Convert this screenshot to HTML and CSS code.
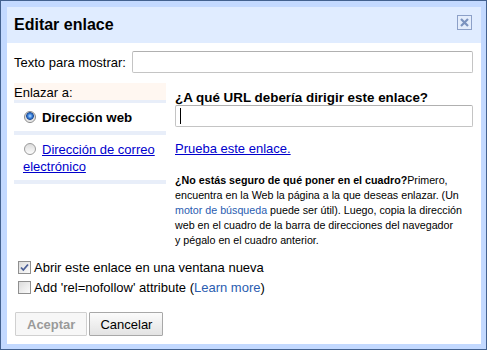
FILE: index.html
```html
<!DOCTYPE html>
<html lang="es">
<head>
  <meta charset="UTF-8">
  <title>Editar enlace</title>
  <link rel="stylesheet" href="styles.css">
</head>
<body>
  <div class="dialog">
    <div class="frame">
      <div class="title-bar">
        <span class="title">Editar enlace</span>
        <span class="close">
          <svg width="15" height="15" viewBox="0 0 15 15">
            <rect x="0.5" y="0.5" width="14" height="14" fill="#e4edfc" stroke="#8ca0c8"/>
            <path d="M4 4 L11 11 M11 4 L4 11" stroke="#7b93bf" stroke-width="2.2"/>
          </svg>
        </span>
      </div>

      <div class="content">
        <div class="text-row">
          <label for="text">Texto para mostrar:</label>
          <input type="text" id="text" class="field">
        </div>

        <div class="link-section">
          <div class="link-types">
            <div class="link-types-head">Enlazar a:</div>
            <div class="link-type selected">
              <span class="radio checked"></span><b>Dirección web</b>
            </div>
            <div class="link-type">
              <span class="radio"></span><a href="#">Dirección de correo electrónico</a>
            </div>
          </div>

          <div class="link-details">
            <h3>¿A qué URL debería dirigir este enlace?</h3>
            <div class="url-box">
              <input type="text" class="field">
              <span class="caret"></span>
            </div>
            <a class="test-link" href="#">Prueba este enlace.</a>
            <p class="help">
              <b>¿No estás seguro de qué poner en el cuadro?</b>Primero, encuentra en la Web la página a la que deseas enlazar. (Un <a href="#">motor de búsqueda</a> puede ser útil). Luego, copia la dirección web en el cuadro de la barra de direcciones del navegador<br>y pégalo en el cuadro anterior.
            </p>
          </div>
        </div>

        <div class="options">
          <div class="check-row">
            <span class="check checked">
              <svg width="11" height="11" viewBox="0 0 11 11">
                <path d="M2 5.5 L4.3 8 L9 2.5" fill="none" stroke="#4a5e96" stroke-width="1.8"/>
              </svg>
            </span>
            <span>Abrir este enlace en una ventana nueva</span>
          </div>
          <div class="check-row">
            <span class="check"></span>
            <span>Add 'rel=nofollow' attribute (<a href="#">Learn more</a>)</span>
          </div>
        </div>

        <div class="buttons">
          <button class="btn disabled">Aceptar</button>
          <button class="btn">Cancelar</button>
        </div>
      </div>
    </div>
  </div>
</body>
</html>
```

FILE: styles.css
```css
body {
  margin: 0;
  font-family: "Liberation Sans", Arial, sans-serif;
  font-size: 13px;
  color: #000;
}

.dialog {
  width: 487px;
  height: 350px;
  box-sizing: border-box;
  border: 1px solid #43618f;
}

.frame {
  height: 100%;
  box-sizing: border-box;
  border-style: solid;
  border-color: #c3d9ff;
  border-width: 6px 5px 5px 6px;
  background-color: #fff;
}

.title-bar {
  height: 36px;
  background-color: #e0ecff;
  display: flex;
  justify-content: space-between;
  align-items: center;
  padding: 0 9px 0 7px;
}

.title {
  font-size: 16px;
  font-weight: bold;
}

.close {
  display: block;
  height: 15px;
  align-self: flex-start;
  margin-top: 8px;
}

.content {
  padding: 8px 8px 0 7px;
}

.text-row {
  display: flex;
  align-items: center;
  gap: 6px;
}

.field {
  display: block;
  box-sizing: border-box;
  height: 22px;
  border: 1px solid #c4c4c4;
  border-top-color: #b0b0b0;
  border-radius: 2px;
  margin: 0;
  padding: 2px 4px;
  font: inherit;
  flex: 1;
  width: 100%;
}

.link-section {
  display: flex;
  gap: 9px;
  margin-top: 10px;
}

.link-types {
  width: 152px;
  flex-shrink: 0;
  background-color: #e8eef9;
  padding-bottom: 4px;
  align-self: flex-start;
}

.link-types-head {
  background-color: #fff7f1;
  height: 17px;
  line-height: 17px;
  padding-top: 1px;
  box-sizing: border-box;
}

.link-type {
  background-color: #fff;
  margin-top: 3px;
  padding: 6px 4px 5px 9px;
  line-height: 17px;
}

.link-type + .link-type {
  margin-top: 4px;
}

.link-type b {
  font-size: 13.3px;
}

.link-type a,
.test-link {
  color: #0000cc;
  text-decoration: underline;
}

.radio {
  display: inline-block;
  width: 12px;
  height: 12px;
  box-sizing: border-box;
  border: 1px solid #9a9a9a;
  border-radius: 50%;
  background: linear-gradient(#dcdcdc, #fcfcfc);
  vertical-align: -1px;
  margin: 0 6px 0 1px;
}

.radio.checked {
  border-color: #8a8a8a;
  background: radial-gradient(circle at 50% 40%, #b8e0ff 0, #3f86e0 2px, #1d4f9c 3.5px, #d8d8d8 4.2px, #f6f6f6 6px);
}

.link-details {
  flex: 1;
  padding-top: 7px;
}

.link-details h3 {
  margin: 0;
  font-size: 13.4px;
  line-height: 15px;
}

.url-box {
  position: relative;
}

.caret {
  position: absolute;
  left: 5px;
  top: 3px;
  width: 1px;
  height: 16px;
  background-color: #000;
}

.test-link {
  display: block;
  margin-top: 14px;
  line-height: 16px;
  width: max-content;
}

.help {
  margin: 16px 0 0 0;
  font-size: 10.7px;
  line-height: 15px;
}

.help a {
  color: #2a5db0;
  text-decoration: none;
}

.options {
  margin-top: 9px;
}

.check-row {
  display: flex;
  align-items: center;
  gap: 3px;
  height: 20px;
  padding-left: 4px;
}

.check-row a {
  color: #2a5db0;
  text-decoration: none;
}

.check {
  display: flex;
  align-items: center;
  justify-content: center;
  width: 13px;
  height: 13px;
  box-sizing: border-box;
  border: 1px solid #8f8f8f;
  background: linear-gradient(135deg, #dcdcdc, #fbfbfb);
}

.buttons {
  display: flex;
  gap: 2px;
  margin-top: 15px;
  padding-left: 1px;
}

.btn {
  height: 24px;
  padding: 0 10px;
  font: inherit;
  border: 1px solid #a8a8a8;
  border-radius: 1px;
  background: linear-gradient(#fbfbfb, #e3e3e3);
  color: #000;
}

.btn.disabled {
  font-weight: bold;
  color: #9a9a9a;
  background: #f7f7f7;
  border-color: #d0d0d0;
  padding: 0 11px;
}
```
